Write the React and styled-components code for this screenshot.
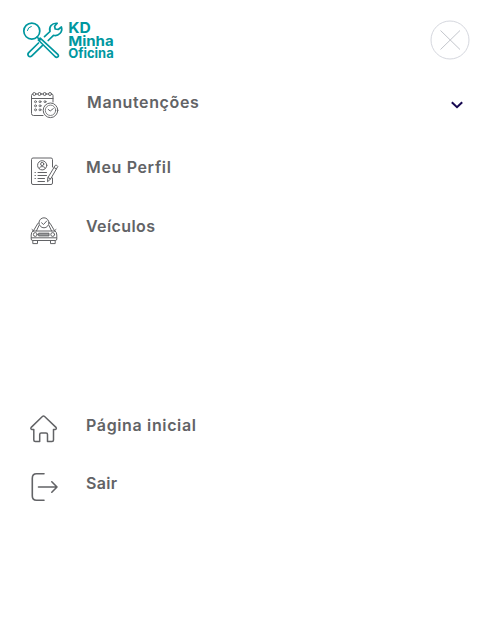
import React from "react";
import styled, { createGlobalStyle } from "styled-components";

const GlobalStyle = createGlobalStyle`
  * { box-sizing: border-box; }
  body { margin: 0; background: #fff; font-family: Inter, "Open Sans", sans-serif; }
`;

const Panel = styled.main`
  height: 635px;
  padding: 20px 30px 0 22px;
  background: #fff;
  color: #626366;
`;

const Header = styled.header`
  display: flex;
  justify-content: space-between;
  align-items: flex-start;
  height: 69px;
`;

const LogoSvg = styled.svg`
  display: block;
  overflow: visible;
  width: 94px;
  height: 40px;
  fill: none;
  stroke: #00979f;
  stroke-width: 1.7;
  stroke-linecap: round;
  stroke-linejoin: round;

  text {
    fill: #00979f;
    stroke: none;
    font-family: Inter, sans-serif;
    font-weight: 700;
  }
`;

const CloseButton = styled.button`
  width: 40px;
  height: 40px;
  padding: 0;
  border: 0;
  background: none;

  svg {
    display: block;
    fill: none;
    stroke: #d5d7de;
    stroke-width: 1;
  }
`;

const Menu = styled.nav`
  display: flex;
  flex-direction: column;
  padding-left: 6px;
`;

const MenuItem = styled.a`
  display: grid;
  grid-template-columns: 32px 1fr 14px;
  column-gap: 26px;
  height: 32px;
  padding-right: 6px;
  margin-bottom: ${(p) => p.$gap}px;
`;

const Icon = styled.svg`
  display: block;
  width: 32px;
  height: 32px;
  fill: none;
  stroke: #626366;
  stroke-width: ${(p) => p.$weight || 1};
  stroke-linecap: round;
  stroke-linejoin: round;
`;

const Label = styled.span`
  padding-left: ${(p) => p.$indent || 0}px;
  padding-top: ${(p) => p.$top}px;
  font-size: 16px;
  line-height: 20px;
  font-weight: 600;
  letter-spacing: ${(p) => p.$tracking}px;
  white-space: nowrap;
`;

const Chevron = styled.svg`
  width: 14px;
  height: 10px;
  margin-top: 11px;
  fill: none;
  stroke: #160851;
  stroke-width: 2;
`;

function Logo() {
  return (
    <LogoSvg viewBox="0 0 94 40" role="img">
      <circle cx="9.8" cy="11.1" r="8" />
      <path d="M5.4 10.5Q6 7 9.3 6.4" strokeWidth="1" />
      <path d="M15 17 18 20M18.2 18.2 35.8 34.3Q37.2 36.3 35.6 37.1 34.4 37.7 33 36.5L16.3 20Z" />
      <path d="M22.5 16.7 28 11.5C26.6 7 29.8 2.7 35.2 3.3L32.6 6.2 33.2 9 36.2 9.5 39.4 7C41 12 36.4 16.6 31.5 15.3L26.2 20.5" />
      <path d="M16.5 23 6.7 32.6Q5.2 34.3 6.5 35.9 8 37.5 9.8 35.8L20.3 25.6" />
      <text x="46.2" y="13" fontSize="14.5" textLength="22.5" lengthAdjust="spacingAndGlyphs">KD</text>
      <text x="46.2" y="25.6" fontSize="13.5" textLength="45.5" lengthAdjust="spacingAndGlyphs">Minha</text>
      <text x="46.2" y="37.9" fontSize="13" textLength="45.5" lengthAdjust="spacingAndGlyphs">Oficina</text>
    </LogoSvg>
  );
}

function CalendarIcon() {
  return (
    <Icon viewBox="0 0 32 32">
      <path d="M15 26.5H5.5Q3.5 26.5 3.5 24.5V6.5Q3.5 5 5 5H23.5Q25 5 25 6.5V13M3.5 9.5H25" />
      <g fill="#fff"><circle cx="6.3" cy="5" r="1.5" /><circle cx="11.5" cy="5" r="1.5" /><circle cx="16.7" cy="5" r="1.5" /><circle cx="22" cy="5" r="1.5" /></g>
      <g strokeWidth="0.9"><circle cx="7.5" cy="12.7" r="1" /><circle cx="12" cy="12.7" r="1" /><circle cx="17" cy="12.7" r="1" /><circle cx="7.5" cy="16.8" r="1" /><circle cx="12" cy="16.8" r="1" /><circle cx="7.5" cy="20.8" r="1" /><circle cx="12" cy="20.8" r="1" /></g>
      <circle cx="22.5" cy="21.3" r="7.3" fill="#fff" />
      <circle cx="22.5" cy="21.3" r="5.2" strokeWidth="0.8" />
      <path d="M20.2 20.4 22.2 22 25.3 19.6" />
    </Icon>
  );
}

function ProfileIcon() {
  return (
    <Icon viewBox="0 0 32 32">
      <path d="M24.5 12V4.5Q24.5 3 23 3H5Q3.5 3 3.5 4.5V28Q3.5 29.5 5 29.5H23Q24.5 29.5 24.5 28V23" />
      <circle cx="14.2" cy="10.3" r="4.6" />
      <circle cx="14.2" cy="9" r="1.6" />
      <path d="M11.2 13.3C11.4 10.9 17 10.9 17.2 13.3M10 17.5H18.5M10 20.5H18.5M10 23.5H16.5M10 26.5H16.5M7 17.5H7.4M7 20.5H7.4M7 23.5H7.4" />
      <path d="M20 22.5 27.3 10.3Q28.6 9.5 29.8 11.5L22.6 24 19.8 26.5ZM26 12.5 28.5 14M20 22.5 22.6 24" />
    </Icon>
  );
}

function CarIcon() {
  return (
    <Icon viewBox="0 0 32 32">
      <path d="M5.3 16 9.5 9Q10.3 7.5 12 7.5H20Q21.7 7.5 22.5 9L26.7 16M8.4 16 11 10.5M23.6 16 21 10.5M5 16H27Q28.8 17.2 28.8 20V24Q28.8 25.5 27.3 25.5H4.7Q3.2 25.5 3.2 24V20Q3.2 17.2 5 16ZM4.8 25.5V28.6H9.5V25.5M22.5 25.5V28.6H27.2V25.5M4 14.5 5.5 15.8M28 14.5 26.5 15.8M3.5 22.8H28.5" />
      <circle cx="7.3" cy="19.5" r="1.9" /><circle cx="24.7" cy="19.5" r="1.9" />
      <rect x="11" y="18.2" width="10" height="2.7" fill="#9b9c9e" />
      <circle cx="16" cy="7.8" r="5" fill="#fff" />
      <path d="M13.6 7.8 15.5 9.5 18.7 6" />
    </Icon>
  );
}

function HomeIcon() {
  return (
    <Icon viewBox="0 0 32 32" $weight={1.5}>
      <path d="M5.8 16.5H4Q2.2 16 3.2 14.4L14.4 3.5Q15.5 2.5 16.6 3.5L28 14.4Q29 16 27.2 16.5H25.5V27Q25.5 28.5 24 28.5H19.5V21.5Q19.5 20 18 20H13.2Q11.7 20 11.7 21.5V28.5H7.3Q5.8 28.5 5.8 27Z" />
    </Icon>
  );
}

function ExitIcon() {
  return (
    <Icon viewBox="0 0 32 32" $weight={1.6}>
      <path d="M16 2.8H8.5Q4.3 2.8 4.3 7.3V25Q4.3 29.2 8.5 29.2H16M10.5 16H29M23.8 10.8 29 16 23.8 21.2" />
    </Icon>
  );
}

export default function App() {
  return (
    <>
      <GlobalStyle />
      <Panel>
        <Header>
          <Logo />
          <CloseButton aria-label="Fechar">
            <svg viewBox="0 0 40 40" width="40" height="40">
              <circle cx="20" cy="20" r="19" />
              <path d="M10.5 10.5 30 29.5M30 10.5 10.5 29.5" stroke="#c3c6cc" />
            </svg>
          </CloseButton>
        </Header>
        <Menu>
          <MenuItem $gap={34}>
            <CalendarIcon />
            <Label $top={3} $indent={1} $tracking={0.62}>Manutenções</Label>
            <Chevron viewBox="0 0 14 10"><path d="M1.8 2.2 7 7.2 12.2 2.2" /></Chevron>
          </MenuItem>
          <MenuItem $gap={28}><ProfileIcon /><Label $top={2} $tracking={0.65}>Meu Perfil</Label></MenuItem>
          <MenuItem $gap={166}><CarIcon /><Label $top={1} $tracking={0.4}>Veículos</Label></MenuItem>
          <MenuItem $gap={26}><HomeIcon /><Label $top={2} $tracking={0.64}>Página inicial</Label></MenuItem>
          <MenuItem $gap={0}><ExitIcon /><Label $top={2} $tracking={0.3}>Sair</Label></MenuItem>
        </Menu>
      </Panel>
    </>
  );
}
